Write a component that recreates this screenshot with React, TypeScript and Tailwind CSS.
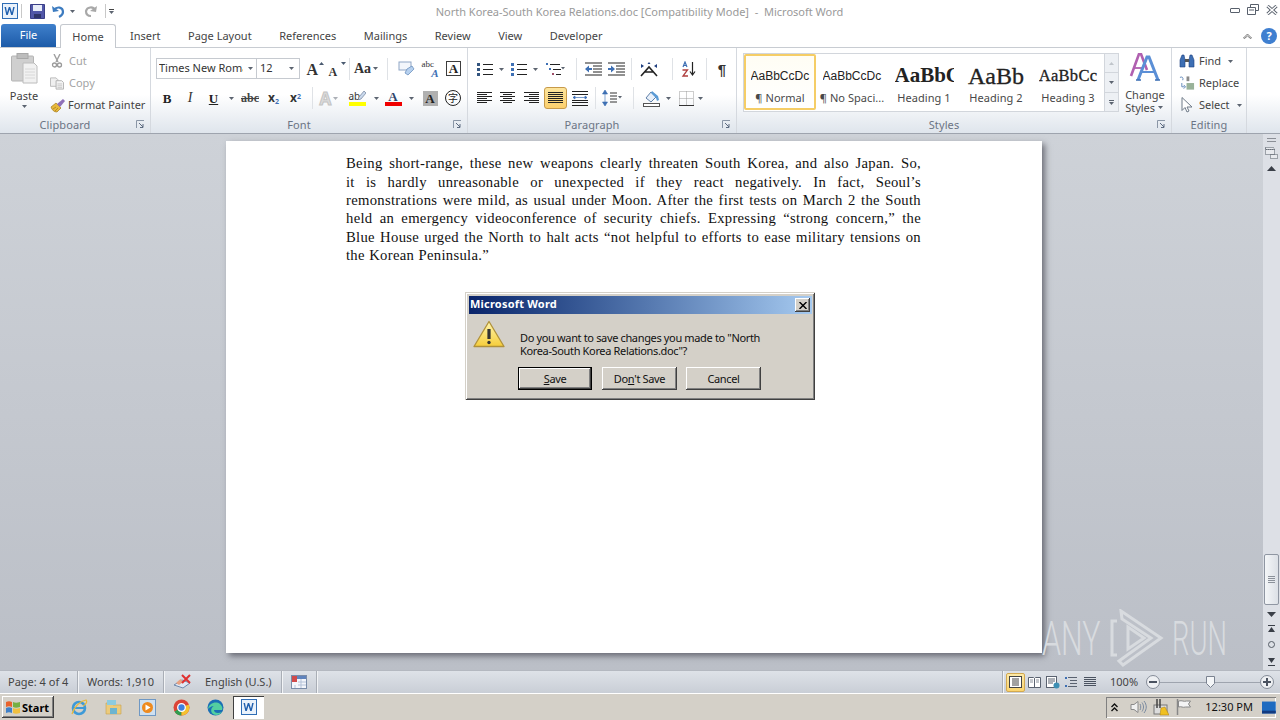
import React from "react";

const ui = "font-['Noto_Sans',sans-serif]";

const Arrow = ({ className = "" }: { className?: string }) => (
  <svg width="5" height="3" viewBox="0 0 5 3" className={className}>
    <path d="M0 0h5L2.500 3z" fill="#5c6470" />
  </svg>
);

const Sep = ({ className = "" }: { className?: string }) => <div className={"w-px h-[22px] bg-[#dfe2e6] " + className} />;

// fixed width slot for a ribbon icon
const Cell = ({ w, children }: { w: number; children: React.ReactNode }) => (
  <div className="flex items-center justify-center shrink-0 h-[22px]" style={{ width: w }}>
    {children}
  </div>
);

const Lines = ({ rows }: { rows: [number, number][] }) => (
  <svg width="16" height="14" viewBox="0 0 16 14">
    {rows.map(([x, w], i) => (
      <rect key={i} x={x} y={1 + i * 2} width={w} height="1" fill="#222" />
    ))}
  </svg>
);

const Launcher = () => (
  <svg width="9" height="9" viewBox="0 0 9 9" className="absolute right-[5px] bottom-[4px]">
    <path d="M0.500 8V0.500H8" fill="none" stroke="#8a96a6" />
    <path d="M3 3l4 4M7 4v3.500H4" fill="none" stroke="#5c6b80" />
  </svg>
);

const Group = ({ w, label, pad, children }: { w: number; label: string; pad?: boolean; children: React.ReactNode }) => (
  <div className="relative shrink-0 h-[85px] border-r border-[#d5d9df] flex flex-col" style={{ width: w }}>
    <div className="flex-1 min-h-0">{children}</div>
    <div className={"h-[17px] pt-[2px] text-center text-[11px] leading-[13px] tracking-[0.1px] text-[#6b7484] " + (pad ? "pr-[20px]" : "")}>{label}</div>
  </div>
);

const WordIcon = ({ size = 16 }: { size?: number }) => (
  <svg width={size} height={size} viewBox="0 0 16 16">
    <rect x="0.500" y="0.500" width="15" height="15" fill="#eaf2fb" stroke="#2f6db5" />
    <path d="M2.500 4l1.800 8h1.500l1.700-5.500L9.200 12h1.500l2-8h-1.500l-1.200 5.500L8.200 4H6.800L5 9.500 4 4z" fill="#1f5fae" />
  </svg>
);

const Paste = () => (
  <svg width="27" height="31" viewBox="0 0 27 31">
    <rect x="0.500" y="3" width="22" height="25" rx="1" fill="#cfcfcf" stroke="#b4b4b4" />
    <rect x="6" y="0.500" width="11" height="5" fill="#bdbdbd" stroke="#a8a8a8" />
    <path d="M12 10h11l3 3v17H12z" fill="#f1f1f1" stroke="#bcbcbc" />
    <path d="M14 16h10M14 19h10M14 22h10M14 25h10" stroke="#d8d8d8" />
  </svg>
);

const Brush = () => (
  <svg width="16" height="15" viewBox="0 0 16 15">
    <path d="M1 9l5-4 5 5-4 4C4 14 2 12 1 9z" fill="#e8b93c" stroke="#a27a1c" strokeWidth="0.700" />
    <path d="M7 6l6-5 2 2-5 6z" fill="#8f70b8" />
    <path d="M3 11l3-2M5 13l3-3" stroke="#a27a1c" strokeWidth="0.700" />
  </svg>
);

const Sci = () => (
  <svg width="12" height="14" viewBox="0 0 12 14">
    <path d="M3 0l4 8M9 0L5 8" stroke="#a0a0a0" strokeWidth="1.400" />
    <circle cx="3.500" cy="11" r="2" fill="none" stroke="#9a9a9a" strokeWidth="1.300" />
    <circle cx="8.500" cy="11" r="2" fill="none" stroke="#9a9a9a" strokeWidth="1.300" />
  </svg>
);

const CopyIcon = () => (
  <svg width="15" height="13" viewBox="0 0 15 13">
    <path d="M0.500 0.500h6l2 2v7h-8z" fill="#efefef" stroke="#b8b8b8" />
    <path d="M6.500 3.500h6l2 2v7h-8z" fill="#f4f4f4" stroke="#b0b0b0" />
    <path d="M8 7h5M8 9h5M8 11h5" stroke="#c4c4c4" />
  </svg>
);

const ToolText = ({ children, c = "#444" }: { children: React.ReactNode; c?: string }) => (
  <span className="text-[11px] whitespace-nowrap" style={{ color: c }}>
    {children}
  </span>
);

const Clipboard = () => (
  <Group w={151} label="Clipboard" pad>
    <div className="flex h-full">
      <div className="w-[48px] pt-[5px] flex flex-col items-center">
        <Paste />
        <div className="mt-[5px] text-[11px] leading-[13px] text-[#3f3f3f]">Paste</div>
        <Arrow className="mt-[3px]" />
      </div>
      <div className="flex flex-col pl-[2px] pt-[2px]">
        <div className="flex items-center gap-[5px] h-[22px]">
          <Cell w={14}><Sci /></Cell>
          <ToolText c="#a3a3a3">Cut</ToolText>
        </div>
        <div className="flex items-center gap-[5px] h-[22px]">
          <Cell w={14}><CopyIcon /></Cell>
          <ToolText c="#a3a3a3">Copy</ToolText>
        </div>
        <div className="flex items-center gap-[2px] h-[22px]">
          <Cell w={16}><Brush /></Cell>
          <ToolText>Format Painter</ToolText>
        </div>
      </div>
    </div>
    <Launcher />
  </Group>
);

const BigA = ({ size, up }: { size: number; up: boolean }) => (
  <div className="relative w-[17px] h-[18px] flex items-end">
    <span className="font-['Liberation_Serif',serif] font-bold text-[#333] leading-none" style={{ fontSize: size }}>A</span>
    <svg width="5" height="3" viewBox="0 0 5 3" className="absolute top-[2px] right-0">
      <path d={up ? "M0 3h5L2.500 0z" : "M0 0h5L2.500 3z"} fill="#4a5a70" />
    </svg>
  </div>
);

const Serif = ({ children, className = "" }: { children: React.ReactNode; className?: string }) => (
  <span className={"font-['Liberation_Serif',serif] leading-none " + className}>{children}</span>
);

const Font = () => (
  <Group w={317} label="Font" pad>
    <div className="pl-[5px] pt-[10px] flex flex-col gap-[8px]">
      <div className="flex items-center h-[21px]">
        <div className="w-[101px] h-[21px] border border-[#c6cad0] bg-white flex items-center pl-[2px] text-[#333] text-[11px]">
          <span className="w-[84px] overflow-hidden whitespace-nowrap">Times New Roman</span>
          <Arrow className="ml-[5px]" />
        </div>
        <div className="w-[43px] h-[21px] border border-l-0 border-[#c6cad0] bg-white flex items-center pl-[3px] text-[#333] text-[11px]">
          <span className="w-[29px]">12</span>
          <Arrow />
        </div>
        <div className="ml-[4px]"><Cell w={22}><BigA size={16} up /></Cell></div>
        <Cell w={22}><BigA size={12} up={false} /></Cell>
        <Cell w={3}><Sep /></Cell>
        <Cell w={30}>
          <Serif className="font-bold text-[14px] text-[#333]">Aa</Serif>
          <Arrow className="ml-[2px]" />
        </Cell>
        <Cell w={13}><Sep /></Cell>
        <Cell w={24}>
          <svg width="17" height="17" viewBox="0 0 17 17">
            <rect x="1" y="2" width="12" height="8" fill="#f3f6fb" stroke="#8fa6c6" />
            <path d="M9 9l5-3 2 3-6 6-3-2z" fill="#b6d0ee" stroke="#5f86b8" strokeWidth="0.700" />
          </svg>
        </Cell>
        <Cell w={24}>
          <div className="flex flex-col items-center w-[17px] h-[18px]">
            <Serif className="self-start text-[9px] h-[8px] text-[#333]">abc</Serif>
            <Serif className="self-end font-bold italic text-[11px] text-[#3d6fb4]">A</Serif>
          </div>
        </Cell>
        <Cell w={23}>
          <div className="w-[15px] h-[15px] border border-[#3d3d3d] flex items-center justify-center">
            <Serif className="font-bold text-[13px] text-[#222]">A</Serif>
          </div>
        </Cell>
      </div>
      <div className="flex items-center h-[22px]">
        <Cell w={22}><Serif className="font-bold text-[13px] text-[#222]">B</Serif></Cell>
        <Cell w={24}><Serif className="italic text-[14px] text-[#333]">I</Serif></Cell>
        <Cell w={23}><Serif className="font-bold underline text-[13px] text-[#222]">U</Serif></Cell>
        <Cell w={12}><Arrow /></Cell>
        <Cell w={26}><Serif className="font-bold line-through text-[12px] text-[#444]">abc</Serif></Cell>
        <Cell w={21}><span className="font-bold text-[12px] leading-none text-[#333]">x<sub className="text-[7px] text-[#3d6fb4]">2</sub></span></Cell>
        <Cell w={23}><span className="font-bold text-[12px] leading-none text-[#333]">x<sup className="text-[7px] text-[#3d6fb4]">2</sup></span></Cell>
        <Cell w={10}><Sep /></Cell>
        <Cell w={24}>
          <span className="font-bold text-[17px] leading-none text-[#dcdcdc] [-webkit-text-stroke:1px_#c4c4c4]">A</span>
          <Arrow className="ml-[2px] opacity-50" />
        </Cell>
        <Cell w={32}>
          <div className="relative flex flex-col items-start w-[17px]">
            <span className="text-[10px] leading-[11px] text-[#333]">ab</span>
            <svg width="8" height="9" viewBox="0 0 8 9" className="absolute right-0 top-0">
              <path d="M6 0l2 2-5 6-3 1 1-3z" fill="#c9d8ec" stroke="#5c6f8c" strokeWidth="0.600" />
            </svg>
            <div className="w-[17px] h-[4px] bg-[#ffff00]" />
          </div>
        </Cell>
        <Cell w={6}><Arrow /></Cell>
        <Cell w={28}>
          <div className="flex flex-col items-center w-[17px]">
            <Serif className="font-bold text-[13px] h-[12px] text-[#30456c]">A</Serif>
            <div className="w-[17px] h-[4px] bg-[#f00000]" />
          </div>
        </Cell>
        <Cell w={8}><Arrow /></Cell>
        <Cell w={30}>
          <div className="w-[15px] h-[15px] bg-[#b0b0b0] flex items-center justify-center">
            <Serif className="font-bold text-[13px] text-[#222]">A</Serif>
          </div>
        </Cell>
        <Cell w={16}>
          <div className="shrink-0 w-[16px] h-[16px] rounded-full border border-[#222] flex items-center justify-center font-['Noto_Sans_CJK_SC',sans-serif] text-[10px] leading-none text-[#222]">字</div>
        </Cell>
      </div>
    </div>
    <Launcher />
  </Group>
);

const Bullets = ({ n }: { n: boolean }) => (
  <svg width="16" height="14" viewBox="0 0 16 14">
    {[1, 6, 11].map((y) => (
      <g key={y}>
        <rect x="0" y={y} width="3" height="3" fill={n ? "#3d6fb4" : "#33557f"} />
        <rect x="6" y={y + 1} width="10" height="1" fill="#222" />
      </g>
    ))}
  </svg>
);

const Indent = ({ dir }: { dir: number }) => (
  <svg width="17" height="14" viewBox="0 0 17 14">
    <path d="M0 1h17M8 4h9M8 7h9M8 10h9M0 13h17" stroke="#222" />
    <path d={dir < 0 ? "M0 7l4-3.500V6h3v2H4v2.500z" : "M7 7L3 3.500V6H0v2h3v2.500z"} fill="#3d6fb4" />
  </svg>
);

const Paragraph = () => (
  <Group w={269} label="Paragraph" pad>
    <div className="pl-[8px] pt-[10px] flex flex-col gap-[7px]">
      <div className="flex items-center h-[22px]">
        <Cell w={17}><Bullets n={false} /></Cell>
        <Cell w={16}><Arrow /></Cell>
        <Cell w={19}><Bullets n /></Cell>
        <Cell w={15}><Arrow /></Cell>
        <Cell w={24}>
          <svg width="19" height="14" viewBox="0 0 19 14">
            <rect x="0" y="1" width="2" height="2" fill="#3d6fb4" />
            <rect x="4" y="2" width="10" height="1" fill="#222" />
            <rect x="3" y="6" width="2" height="2" fill="#3d6fb4" />
            <rect x="7" y="7" width="8" height="1" fill="#222" />
            <rect x="6" y="11" width="2" height="2" fill="#a0506a" />
            <rect x="10" y="12" width="5" height="1" fill="#222" />
            <path d="M15 5h4l-2 2.500z" fill="#5c6470" />
          </svg>
        </Cell>
        <Cell w={18}><Sep /></Cell>
        <Cell w={17}><Indent dir={-1} /></Cell>
        <Cell w={28}><Indent dir={1} /></Cell>
        <Cell w={3}><Sep /></Cell>
        <Cell w={34}>
          <svg width="22" height="15" viewBox="0 0 22 15">
            <path d="M2 14L10 5l8 9M5 10h10" fill="none" stroke="#222" strokeWidth="1.600" />
            <path d="M2 2l3 2-3 2zM18 2l-3 2 3 2z" fill="#1f3f80" />
            <path d="M10 0l1.500 2h-3z" fill="#1f3f80" />
          </svg>
        </Cell>
        <Cell w={10}><Sep /></Cell>
        <Cell w={22}>
          <svg width="15" height="16" viewBox="0 0 15 16">
            <path d="M2 6l2-5 2 5M2.700 4.500h2.600" fill="none" stroke="#3d6fb4" strokeWidth="1.200" />
            <path d="M1.500 9h5L2 15h5" fill="none" stroke="#b04040" strokeWidth="1.300" />
            <path d="M11.500 1v12M9 10.500l2.500 3.500 2.500-3.500" fill="none" stroke="#222" strokeWidth="1.200" />
          </svg>
        </Cell>
        <Cell w={14}><Sep /></Cell>
        <Cell w={18}>
          <span className="font-['Liberation_Sans',sans-serif] font-bold text-[15px] leading-none text-[#333]">¶</span>
        </Cell>
      </div>
      <div className="flex items-center h-[22px]">
        <Cell w={17}><Lines rows={[[0, 15], [0, 10], [0, 15], [0, 10], [0, 15], [0, 10]]} /></Cell>
        <div className="ml-[7px]"><Cell w={16}><Lines rows={[[0, 15], [3, 9], [0, 15], [3, 9], [0, 15], [3, 9]]} /></Cell></div>
        <div className="ml-[8px]"><Cell w={16}><Lines rows={[[0, 15], [5, 10], [0, 15], [5, 10], [0, 15], [5, 10]]} /></Cell></div>
        <div className="ml-[4px] w-[23px] h-[22px] flex items-center justify-center rounded-[3px] border border-[#c79a4a] bg-linear-to-b from-[#fde59c] to-[#fbcf6d]">
          <Lines rows={[[0, 15], [0, 15], [0, 15], [0, 15], [0, 15], [0, 15]]} />
        </div>
        <div className="ml-[1px]">
          <Cell w={23}>
            <svg width="16" height="15" viewBox="0 0 16 15">
              <rect x="0" y="0" width="16" height="1" fill="#222" />
              <rect x="0" y="3" width="16" height="1" fill="#222" />
              <path d="M1 6.500h14M1 6.500l2-1.500v3zM15 6.500l-2-1.500v3z" stroke="#3d6fb4" fill="#3d6fb4" strokeWidth="0.700" />
              <rect x="0" y="9" width="16" height="1" fill="#222" />
              <rect x="0" y="11" width="16" height="1" fill="#222" />
              <rect x="0" y="14" width="16" height="1" fill="#222" />
            </svg>
          </Cell>
        </div>
        <Cell w={9}><Sep /></Cell>
        <Cell w={24}>
          <svg width="20" height="16" viewBox="0 0 20 16">
            <path d="M3 0l2.500 4h-5zM3 16l2.500-4h-5zM3 4v8" fill="#3d6fb4" stroke="#3d6fb4" strokeWidth="0.600" />
            <path d="M8 3h7M8 6h7M8 9h7M8 12h7" stroke="#333" />
            <path d="M16 6h4l-2 2.500z" fill="#5c6470" />
          </svg>
        </Cell>
        <Cell w={19}><Sep /></Cell>
        <Cell w={18}>
          <svg width="18" height="17" viewBox="0 0 18 17">
            <path d="M3 8l5-6 5 5-5 5z" fill="#e8f0fa" stroke="#5f7fa8" />
            <path d="M9 1l6 5 1 4-2 1-1-3-5-5z" fill="#5b9bd5" />
            <rect x="0.500" y="13.500" width="16" height="3" fill="#fff" stroke="#555" />
          </svg>
        </Cell>
        <Cell w={14}><Arrow /></Cell>
        <Cell w={22}>
          <svg width="15" height="15" viewBox="0 0 15 15">
            <path d="M0.500 0.500h14v14h-14zM7.500 0.500v14M0.500 7.500h14" fill="none" stroke="#9a9a9a" strokeDasharray="1 1" />
            <path d="M0 14.500h15" stroke="#333" />
          </svg>
        </Cell>
        <Cell w={7}><Arrow /></Cell>
      </div>
    </div>
    <Launcher />
  </Group>
);

const StyleCell = ({ sample, label, active, sampleClass }: { sample: string; label: string; active?: boolean; sampleClass: string }) => (
  <div
    className={
      "shrink-0 h-[56px] w-[72px] flex flex-col items-center pt-[10px] " +
      (active ? "border-2 border-[#f5cd66] rounded-[2px] bg-linear-to-b from-[#fffdf4] to-white" : "border-2 border-transparent")
    }
  >
    <div className={"w-[59px] h-[20px] flex items-center justify-center overflow-hidden whitespace-nowrap text-[#222] " + sampleClass}>
      {sample}
    </div>
    <div className="mt-[5px] text-[11px] leading-[13px] tracking-[0.05px] text-[#484848] whitespace-nowrap">{label}</div>
  </div>
);

const Styles = () => (
  <Group w={435} label="Styles" pad>
    <div className="flex pt-[5px] pl-[6px]">
      <div className="w-[376px] h-[59px] border border-[#d2d6dc] bg-white flex">
        <StyleCell active sample="AaBbCcDc" label="¶ Normal" sampleClass="font-['Liberation_Sans',sans-serif] text-[12px] justify-start" />
        <StyleCell sample="AaBbCcDc" label="¶ No Spaci..." sampleClass="font-['Liberation_Sans',sans-serif] text-[12px] justify-start" />
        <StyleCell sample="AaBbC" label="Heading 1" sampleClass="font-['Liberation_Serif',serif] font-bold text-[21px] justify-start" />
        <StyleCell sample="AaBb" label="Heading 2" sampleClass="font-['Liberation_Serif',serif] text-[24px] [-webkit-text-stroke:0.3px_#222]" />
        <StyleCell sample="AaBbCc" label="Heading 3" sampleClass="font-['Liberation_Serif',serif] font-medium text-[16.500px] [-webkit-text-stroke:0.3px_#222] tracking-[0.3px]" />
        <div className="ml-auto w-[14px] flex flex-col border-l border-[#d2d6dc] bg-[#edf0f4]">
          <div className="h-[19px] flex items-center justify-center border-b border-[#d2d6dc]"><Arrow className="rotate-180 opacity-30" /></div>
          <div className="h-[20px] flex items-center justify-center border-b border-[#d2d6dc]"><Arrow /></div>
          <div className="flex-1 flex flex-col items-center justify-center gap-[1px]">
            <div className="w-[5px] h-px bg-[#5c6470]" />
            <Arrow />
          </div>
        </div>
      </div>
      <div className="ml-[2px] w-[48px] flex flex-col items-center">
        <svg width="32" height="30" viewBox="0 0 32 30">
          <path d="M2 23L10 1h2l6 16" fill="none" stroke="#b060b0" strokeWidth="2.600" />
          <path d="M6 15h8" stroke="#b060b0" strokeWidth="1.800" />
          <path d="M9 27L18 4h2l9 23" fill="none" stroke="#5b8fd6" strokeWidth="3" />
          <path d="M13 19h12" stroke="#5b8fd6" strokeWidth="2" />
          <path d="M7 27h5M26 27h5" stroke="#3d6fb4" strokeWidth="1.300" />
        </svg>
        <div className="mt-[5px] text-[11px] leading-[13px] text-[#484848] text-center">
          Change
          <div className="flex items-center gap-[3px]">Styles<Arrow /></div>
        </div>
      </div>
    </div>
    <Launcher />
  </Group>
);

const Editing = () => (
  <Group w={75} label="Editing">
    <div className="flex flex-col pt-[2px] pl-[7px]">
      <div className="flex items-center gap-[4px] h-[22px]">
        <Cell w={16}>
          <svg width="16" height="14" viewBox="0 0 16 14">
            <path d="M1 13V6l2-5h2l1 5v7zM10 13V6l1-5h2l2 5v7z" fill="#3d6fb4" stroke="#1f3f80" strokeWidth="0.600" />
            <rect x="6" y="5" width="4" height="3" fill="#555" />
          </svg>
        </Cell>
        <ToolText>Find</ToolText>
        <Arrow className="ml-[3px]" />
      </div>
      <div className="flex items-center gap-[4px] h-[22px]">
        <Cell w={16}>
          <svg width="17" height="17" viewBox="0 0 17 17">
            <path d="M1 2c2-1 4 0 3 3M3 8v4h3M5 10l2 2-2 2" fill="none" stroke="#5f86b8" />
            <rect x="8" y="8" width="8" height="7" fill="#7f9f7f" opacity="0.800" />
            <rect x="8" y="1" width="3" height="5" fill="#8a8a8a" />
          </svg>
        </Cell>
        <ToolText>Replace</ToolText>
      </div>
      <div className="flex items-center gap-[4px] h-[22px]">
        <Cell w={16}>
          <svg width="13" height="16" viewBox="0 0 13 16">
            <path d="M1 0.500v13l3-3 2 4.500 2-1-2-4h5z" fill="#fff" stroke="#6f7a88" />
          </svg>
        </Cell>
        <ToolText>Select</ToolText>
        <Arrow className="ml-[3px]" />
      </div>
    </div>
  </Group>
);

const Qat = () => (
  <div className="flex items-center pl-[2px] w-[130px]">
    <WordIcon />
    <div className="ml-[3px] w-px h-[14px] bg-[#c8c8c8]" />
    <div className="ml-[8px]">
      <svg width="15" height="15" viewBox="0 0 15 15">
        <path d="M0.500 0.500h14v14h-14z" fill="#5157a8" stroke="#3a3f88" />
        <rect x="3" y="1" width="9" height="6" fill="#e8edf8" />
        <rect x="4" y="10" width="7" height="4" fill="#2f3468" />
      </svg>
    </div>
    <div className="ml-[7px]">
      <svg width="14" height="13" viewBox="0 0 14 13">
        <path d="M2 5c3-4 9-3 9 2 0 3-2 4-4 5" fill="none" stroke="#3d7cc0" strokeWidth="2.200" />
        <path d="M0 1l1 6 6-1z" fill="#3d7cc0" />
      </svg>
    </div>
    <Arrow className="ml-[4px]" />
    <div className="ml-[9px]">
      <svg width="13" height="13" viewBox="0 0 13 13">
        <path d="M11 5c-2-4-8-3-9 1 0 3 2 5 5 5" fill="none" stroke="#a8a8a8" strokeWidth="2.200" />
        <path d="M13 1l-1 6-6-1z" fill="#a8a8a8" />
      </svg>
    </div>
    <div className="ml-[8px] w-px h-[14px] bg-[#c8c8c8]" />
    <div className="ml-[3px] flex flex-col items-center gap-[1px]">
      <div className="w-[5px] h-px bg-[#444]" />
      <Arrow />
    </div>
  </div>
);

const TitleBar = () => (
  <div className="h-[22px] shrink-0 flex items-center bg-white">
    <Qat />
    <div className="flex-1 text-center pr-[76px] pt-[2px] text-[11px] text-[#9a9a9a] whitespace-nowrap">
      North Korea-South Korea Relations.doc [Compatibility Mode]&nbsp; -&nbsp; Microsoft Word
    </div>
    <div className="w-[55px] flex items-center gap-[7px] pl-[5px] -mt-[3px]">
      <div className="w-[10px] h-[5px] mt-[2px] rounded-[1px] border border-[#58606c]" />
      <svg width="12" height="11" viewBox="0 0 12 11">
        <path d="M3.500 3V0.500h8v6H9M0.500 3.500h8v7h-8z" fill="none" stroke="#58606c" />
        <path d="M2 6h5" stroke="#58606c" />
      </svg>
      <svg width="12" height="10" viewBox="0 0 12 10">
        <path d="M1.500 1l9 8M10.500 1l-9 8" stroke="#58606c" strokeWidth="3.200" />
        <path d="M1.500 1l9 8M10.500 1l-9 8" stroke="#fff" strokeWidth="1.400" />
      </svg>
    </div>
  </div>
);

const tabs = ["Insert", "Page Layout", "References", "Mailings", "Review", "View", "Developer"];

const Tabs = () => (
  <div className="h-[25px] shrink-0 flex items-end bg-white relative">
    <div className="ml-px w-[55px] h-[23px] rounded-t-[3px] bg-linear-to-b from-[#3f80cc] to-[#1c5ba8] text-white text-[11px] flex items-center justify-center">
      File
    </div>
    <div className="ml-[4px] w-[56px] h-[24px] pt-[2px] -mb-px z-10 rounded-t-[3px] border border-b-0 border-[#c4c8ce] bg-white text-[#444] text-[11px] flex items-center justify-center">
      Home
    </div>
    <div className="flex h-[23px] pt-[2px] items-center ml-[14px] gap-[27.500px] text-[#444] text-[11px]">
      {tabs.map((t) => (
        <span key={t} className="whitespace-nowrap">{t}</span>
      ))}
    </div>
    <div className="ml-auto mr-[3px] flex items-center gap-[9px] h-[23px]">
      <svg width="9" height="6" viewBox="0 0 9 6">
        <path d="M0.500 5l4-4 4 4-1 0.500-3-2.500-3 2.500z" fill="#fff" stroke="#555" strokeWidth="0.800" />
      </svg>
      <div className="w-[16px] h-[16px] rounded-full bg-[#3f7fd0] flex items-center justify-center text-white font-bold text-[11px] leading-none">?</div>
    </div>
  </div>
);

const Ribbon = () => (
  <div className="h-[87px] shrink-0 flex border-t border-[#c8ccd2] border-b border-b-[#9ea4ae] bg-linear-to-b from-white from-55% to-[#dfe5ec]">
    <Clipboard />
    <Font />
    <Paragraph />
    <Styles />
    <Editing />
  </div>
);

const body = [
  "Being short-range, these new weapons clearly threaten South Korea, and also Japan. So,",
  "it is hardly unreasonable or unexpected if they react negatively. In fact, Seoul’s",
  "remonstrations were mild, as usual under Moon. After the first tests on March 2 the South",
  "held an emergency videoconference of security chiefs. Expressing “strong concern,” the",
  "Blue House urged the North to halt acts “not helpful to efforts to ease military tensions on",
];

const Page = () => (
  <div className="w-[816px] h-[512px] mt-[7px] ml-[226px] shrink-0 bg-white shadow-[3px_3px_6px_rgba(60,60,70,0.65)] pl-[120px] pr-[121px] pt-[13.400px] font-['Liberation_Serif',serif] text-[14.67px] leading-[18.33px] tracking-[0.3px] text-[#111]">
    {body.map((l) => (
      <div key={l} className="text-justify [text-align-last:justify] whitespace-normal">{l}</div>
    ))}
    <div className="flex justify-between w-[143px]">
      <span>the</span><span>Korean</span><span>Peninsula.”</span>
    </div>
  </div>
);

const ScrollBar = () => (
  <div className="absolute right-0 top-0 bottom-0 w-[17px] bg-[#dde0e6] flex flex-col items-center">
    <div className="h-[4px] w-[9px] mt-[4px] border-y border-[#8b8f96]" />
    <div className="mt-[3px] w-[14px] h-[14px] flex items-center justify-center">
      <svg width="13" height="13" viewBox="0 0 13 13">
        <path d="M0.500 1.500h8l1 2h-9zM0.500 3.500h9v5h-9zM5.500 8.500h7v4h-7z" fill="#e8eaee" stroke="#555c66" strokeDasharray="1 1" />
      </svg>
    </div>
    <div className="mt-[7px]"><svg width="9" height="5" viewBox="0 0 9 5"><path d="M0 5h9L4.500 0z" fill="#3a3f48" /></svg></div>
    <div className="h-[383px]" />
    <div className="w-[15px] h-[51px] rounded-[2px] border border-[#8f96a2] bg-linear-to-r from-[#f4f6f8] to-[#dce0e6] flex flex-col items-center justify-center gap-[1px]">
      <div className="w-[7px] h-px bg-[#8b919a]" />
      <div className="w-[7px] h-px bg-[#8b919a]" />
      <div className="w-[7px] h-px bg-[#8b919a]" />
      <div className="w-[7px] h-px bg-[#8b919a]" />
    </div>
    <div className="mt-[7px]"><svg width="9" height="5" viewBox="0 0 9 5"><path d="M0 0h9L4.500 5z" fill="#3a3f48" /></svg></div>
    <div className="mt-[7px]">
      <svg width="7" height="8" viewBox="0 0 7 8"><path d="M0 1h7v1H0zM0 8l3.500-5L7 8z" fill="#3a3f48" /></svg>
    </div>
    <div className="mt-[9px] w-[7px] h-[7px] rounded-full border border-[#555c66]" />
    <div className="mt-[10px]">
      <svg width="7" height="8" viewBox="0 0 7 8"><path d="M0 7h7v1H0zM0 0l3.500 5L7 0z" fill="#3a3f48" /></svg>
    </div>
  </div>
);

const Watermark = () => (
  <div className="absolute left-[1042px] top-[474px] h-[60px] flex items-center gap-[8px] text-[#d8dbdf] font-['Roboto',sans-serif] font-light pointer-events-none">
    <span className="inline-block w-[60px] text-[49px] leading-none whitespace-nowrap scale-x-[0.62] origin-left">ANY</span>
    <svg width="54" height="58" viewBox="0 0 54 58">
      <path d="M7 12H2v34h5M11 2l40 27-38 27-4-4 32-23L12 10z" fill="none" stroke="#d8dbdf" strokeWidth="3" />
      <path d="M18 18v22l16-11z" fill="none" stroke="#d8dbdf" strokeWidth="3" />
    </svg>
    <span className="inline-block w-[58px] text-[49px] leading-none whitespace-nowrap scale-x-[0.56] origin-left">RUN</span>
  </div>
);

const DlgButton = ({ children, primary }: { children: React.ReactNode; primary?: boolean }) => (
  <div
    className={
      "h-[23px] pt-[1px] bg-[#d4d0c8] flex items-center justify-center text-[11px] tracking-[-0.35px] text-[#111] " +
      (primary
        ? "w-[74px] border border-black shadow-[inset_-1px_-1px_0_#404040,inset_1px_1px_0_#fff,inset_-2px_-2px_0_#808080]"
        : "w-[75px] shadow-[inset_-1px_-1px_0_#404040,inset_1px_1px_0_#fff,inset_-2px_-2px_0_#808080]")
    }
  >
    {children}
  </div>
);

const Dialog = () => (
  <div className="absolute left-[465px] top-[292px] w-[350px] h-[108px] bg-[#d4d0c8] border-t border-l border-t-[#d4d0c8] border-l-[#d4d0c8] shadow-[inset_-1px_-1px_0_#404040,inset_1px_1px_0_#fff,inset_-2px_-2px_0_#808080] p-[3px] font-['Noto_Sans',sans-serif]">
    <div className="h-[18px] bg-linear-to-r from-[#0a246a] to-[#a6caf0] flex items-center justify-between pl-[1px] pr-[2px]">
      <span className="text-white font-bold text-[11px] leading-none tracking-[0.2px] -mt-[3px]">Microsoft Word</span>
      <div className="w-[15px] h-[14px] bg-[#d4d0c8] flex items-center justify-center shadow-[inset_-1px_-1px_0_#404040,inset_1px_1px_0_#fff,inset_-2px_-2px_0_#808080]">
        <svg width="8" height="7" viewBox="0 0 8 7"><path d="M0.500 0l7 7M7.500 0l-7 7" stroke="#000" strokeWidth="1.400" /></svg>
      </div>
    </div>
    <div className="flex pl-[4px] pt-[6px]">
      <svg width="32" height="28" viewBox="0 0 32 28" className="shrink-0">
        <defs>
          <linearGradient id="warn" x1="0" y1="0" x2="0" y2="1">
            <stop offset="0" stopColor="#fff6b0" />
            <stop offset="1" stopColor="#f6cd3a" />
          </linearGradient>
        </defs>
        <path d="M16 1.500L1 26.500h30z" fill="url(#warn)" stroke="#b0913a" strokeWidth="1.300" strokeLinejoin="round" />
        <path d="M16 9v10" stroke="#333" strokeWidth="3.200" />
        <circle cx="16" cy="22.500" r="1.700" fill="#333" />
      </svg>
      <div className="ml-[15px] mt-[11px] text-[11px] leading-[13px] tracking-[-0.35px] text-[#111]">
        Do you want to save changes you made to "North<br />Korea-South Korea Relations.doc"?
      </div>
    </div>
    <div className="absolute left-[52px] top-[74px] flex gap-[10px]">
      <DlgButton primary><span className="underline">S</span>ave</DlgButton>
      <DlgButton>Do<span className="underline">n</span>'t Save</DlgButton>
      <div className="-ml-[1px]"><DlgButton>Cancel</DlgButton></div>
    </div>
  </div>
);

const StatusSep = () => <div className="w-[2px] h-[22px] border-l border-[#a9aeb6] bg-[#f2f4f6]" />;

const StatusBar = () => (
  <div className="h-[23px] shrink-0 flex items-center bg-linear-to-b from-[#dee2e8] to-[#c9ced6] text-[#444] text-[11px] whitespace-nowrap border-t border-[#b4b8c0]">
    <span className="ml-[8px] w-[69px]">Page: 4 of 4</span>
    <StatusSep />
    <span className="ml-[8px] w-[76px]">Words: 1,910</span>
    <StatusSep />
    <div className="ml-[8px] w-[32px]">
      <svg width="19" height="16" viewBox="0 0 19 16">
        <path d="M1 11l8-5 8 3-7 5z" fill="#dfe8f4" stroke="#6f88ac" />
        <path d="M3 9c2-2 3-3 5-4l2 3-4 3z" fill="#e8a080" />
        <path d="M9 1l8 8M17 1L9 9" stroke="#e03030" strokeWidth="2" />
      </svg>
    </div>
    <span className="w-[76px]">English (U.S.)</span>
    <StatusSep />
    <div className="ml-[8px] w-[25px]">
      <svg width="16" height="14" viewBox="0 0 16 14">
        <rect x="0.500" y="0.500" width="15" height="13" fill="#f4f6fb" stroke="#7a8ca8" />
        <rect x="1" y="1" width="14" height="3" fill="#5f83bd" />
        <rect x="1" y="1" width="5" height="6" fill="#d04a4a" />
        <path d="M7 7h8M7 10h8M4 10v3M10 4v9" stroke="#b4c2d8" />
      </svg>
    </div>
    <StatusSep />
    <div className="ml-auto flex items-center h-full">
      <StatusSep />
      <div className="ml-[2px] w-[19px] h-[19px] rounded-[2px] border border-[#d3a94f] bg-linear-to-b from-[#fdeaa8] to-[#fbd56f] flex items-center justify-center">
        <svg width="13" height="12" viewBox="0 0 13 12">
          <rect x="0.500" y="0.500" width="12" height="11" fill="#fff" stroke="#444" />
          <path d="M3 3h7M3 5h7M3 7h7M3 9h7" stroke="#444" />
        </svg>
      </div>
      <div className="w-[19px] flex justify-center">
        <svg width="13" height="12" viewBox="0 0 13 12">
          <path d="M0.500 1.500h5l1 1 1-1h5v10h-12zM6.500 2.500v9" fill="#fff" stroke="#5a6270" />
          <path d="M2 4h3M2 6h3M8 4h3M8 6h3" stroke="#8a919c" />
        </svg>
      </div>
      <div className="w-[18px] flex justify-center">
        <svg width="14" height="13" viewBox="0 0 14 13">
          <rect x="0.500" y="0.500" width="10" height="11" fill="#fff" stroke="#5a6270" />
          <path d="M2 3h7M2 5h7M2 7h5" stroke="#5a6270" />
          <circle cx="10.500" cy="9.500" r="3" fill="#3d8fb4" />
        </svg>
      </div>
      <div className="w-[18px] flex justify-center">
        <svg width="12" height="11" viewBox="0 0 12 11">
          <path d="M3 0.500h9M5 3.500h7M5 6.500h7M3 9.500h9" stroke="#5a6270" />
          <path d="M0 0h2v2H0zM0 8h2v2H0z" fill="#3d6fb4" />
        </svg>
      </div>
      <div className="w-[20px] flex justify-center">
        <svg width="12" height="10" viewBox="0 0 12 10">
          <path d="M0 0.500h12M0 2.500h12M0 4.500h12M0 6.500h12M0 8.500h12" stroke="#4a5260" />
        </svg>
      </div>
      <span className="ml-[10px] w-[29px] text-[11px]">100%</span>
      <div className="w-[14px] h-[14px] ml-[7px] rounded-full border border-[#858c98] bg-[#eef0f3] flex items-center justify-center">
        <div className="w-[8px] h-[2px] bg-[#4a5260]" />
      </div>
      <div className="relative w-[100px] h-[1px] bg-[#9ea4ae]">
        <svg width="9" height="12" viewBox="0 0 9 12" className="absolute left-[46px] -top-[6px]">
          <path d="M0.500 0.500h8v7l-4 4-4-4z" fill="#f4f6f8" stroke="#7a8290" />
        </svg>
      </div>
      <div className="w-[14px] h-[14px] mr-[6px] rounded-full border border-[#858c98] bg-[#eef0f3] flex items-center justify-center relative">
        <div className="w-[8px] h-[2px] bg-[#4a5260]" />
        <div className="absolute w-[2px] h-[8px] bg-[#4a5260]" />
      </div>
    </div>
  </div>
);

const TrayIcon = ({ children, w }: { children: React.ReactNode; w: number }) => (
  <div className="flex items-center justify-center" style={{ width: w }}>{children}</div>
);

const Taskbar = () => (
  <div className="h-[27px] shrink-0 bg-[#d4d0c8] border-t border-white flex items-center pl-[2px] pr-[4px]">
    <div className="w-[52px] h-[22px] flex items-center pl-[3px] gap-[1px] bg-[#d4d0c8] shadow-[inset_-1px_-1px_0_#404040,inset_1px_1px_0_#fff,inset_-2px_-2px_0_#808080]">
      <svg width="16" height="14" viewBox="0 0 16 14">
        <path d="M1 2c2-1 4-1 6 0v5C5 6 3 6 1 7z" fill="#e8622c" />
        <path d="M8 2c2 1 4 1 7 0v5c-3 1-5 1-7 0z" fill="#76b043" />
        <path d="M1 8c2-1 4-1 6 0v5c-2-1-4-1-6 0z" fill="#3f80c8" />
        <path d="M8 8c2 1 4 1 7 0v5c-3 1-5 1-7 0z" fill="#f0c040" />
      </svg>
      <span className="font-['Noto_Sans',sans-serif] font-bold text-[11px] text-black leading-none">Start</span>
    </div>
    <div className="ml-[17px] flex items-center gap-[17px]">
      <TrayIcon w={17}>
        <svg width="17" height="17" viewBox="0 0 17 17">
          <circle cx="8" cy="9" r="6" fill="none" stroke="#3e9ad8" strokeWidth="2.600" />
          <path d="M3 9h11" stroke="#3e9ad8" strokeWidth="2" />
          <path d="M1 15C3 8 9 2 15 1c2 2-1 5-3 6" fill="none" stroke="#e8b93c" strokeWidth="1.200" />
        </svg>
      </TrayIcon>
      <TrayIcon w={17}>
        <svg width="17" height="16" viewBox="0 0 17 16">
          <path d="M1 4h6l1 2h8v9H1z" fill="#eccb7c" stroke="#c7a14f" strokeWidth="0.600" />
          <rect x="2" y="1" width="9" height="5" fill="#8ccbe0" />
          <rect x="5" y="9" width="7" height="6" fill="#6cb4d0" />
        </svg>
      </TrayIcon>
      <TrayIcon w={17}>
        <svg width="17" height="17" viewBox="0 0 17 17">
          <rect x="0.500" y="0.500" width="16" height="16" fill="#cfe0f0" stroke="#6f98c4" />
          <circle cx="8.500" cy="8.500" r="5.500" fill="#ee8a1e" />
          <path d="M6.500 5.500v6l5-3z" fill="#fff" />
        </svg>
      </TrayIcon>
      <TrayIcon w={17}>
        <svg width="17" height="17" viewBox="0 0 17 17">
          <circle cx="8.500" cy="8.500" r="8" fill="#dc4437" />
          <path d="M8.500 8.500L1.500 12.500A8 8 0 0 0 8.500 16.500z" fill="#2f9e4f" />
          <path d="M8.500 8.500l7.300-3A8 8 0 0 1 8.500 16.500z" fill="#f5c22f" />
          <circle cx="8.500" cy="8.500" r="3.800" fill="#3f80e0" stroke="#fff" strokeWidth="1.300" />
        </svg>
      </TrayIcon>
      <TrayIcon w={17}>
        <svg width="17" height="17" viewBox="0 0 17 17">
          <circle cx="8.500" cy="8.500" r="8" fill="#1a6fb5" />
          <path d="M1 10C2 4 9 2 13 5c2 2 3 4 2 6H7c0 3 4 4 8 2-2 3-6 4-9 2-3-2-2-7 1-8-3 0-5 2-6 3z" fill="#53cfa0" />
        </svg>
      </TrayIcon>
    </div>
    <div className="ml-[9px] w-[31px] h-[23px] bg-white shadow-[inset_1px_1px_0_#404040,inset_-1px_-1px_0_#fff] flex items-center justify-center">
      <WordIcon />
    </div>
    <div className="ml-auto w-[170px] h-[21px] flex items-center shadow-[inset_1px_1px_0_#808080,inset_-1px_-1px_0_#fff] pl-[5px]">
      <TrayIcon w={8}>
        <svg width="7" height="9" viewBox="0 0 7 9"><path d="M0.500 4l3-3 3 3M0.500 8l3-3 3 3" fill="none" stroke="#111" strokeWidth="1.400" /></svg>
      </TrayIcon>
      <div className="ml-[12px]">
        <svg width="17" height="14" viewBox="0 0 17 14">
          <path d="M1 4.500h3l4-3v11l-4-3H1z" fill="#f0f0f0" stroke="#8a8a8a" />
          <path d="M10 4c1 2 1 4 0 6M12 2.500c2 3 2 6 0 9M14 1c3 4 3 8 0 12" fill="none" stroke="#7a8aa0" />
        </svg>
      </div>
      <div className="ml-[6px]">
        <svg width="16" height="17" viewBox="0 0 16 17">
          <rect x="1" y="6" width="13" height="9" fill="#dcdcdc" stroke="#777" />
          <path d="M4 0v9M7 0v9" stroke="#444" strokeWidth="1.500" />
          <path d="M8 9l4-1 4 8H7z" fill="#f0c020" stroke="#a87a10" strokeWidth="0.500" />
        </svg>
      </div>
      <div className="ml-[7px]">
        <svg width="16" height="16" viewBox="0 0 16 16">
          <path d="M1.500 0v16" stroke="#888" strokeWidth="1.500" />
          <path d="M2.500 2c4-1 5 1 8 0l4 0-2 3 2 3h-5c-3 1-4-1-7 0z" fill="#f4f4f4" stroke="#888" />
        </svg>
      </div>
      <span className="ml-[13px] w-[61px] font-['Noto_Sans',sans-serif] text-[11px] text-[#111]">12:30 PM</span>
      <svg width="15" height="13" viewBox="0 0 15 13" className="ml-[1px]">
        <rect width="15" height="13" fill="#1e6bc0" />
        <rect y="10" width="15" height="3" fill="#123a80" />
      </svg>
    </div>
  </div>
);

export default function App() {
  return (
    <div className={"relative w-[1280px] h-[720px] overflow-hidden flex flex-col bg-white " + ui}>
      <TitleBar />
      <Tabs />
      <Ribbon />
      <div className="relative h-[536px] shrink-0 overflow-hidden bg-linear-to-b from-[#ced2d8] to-[#bbbfc7]">
        <Page />
        <ScrollBar />
        <Watermark />
      </div>
      <StatusBar />
      <Taskbar />
      <Dialog />
    </div>
  );
}
